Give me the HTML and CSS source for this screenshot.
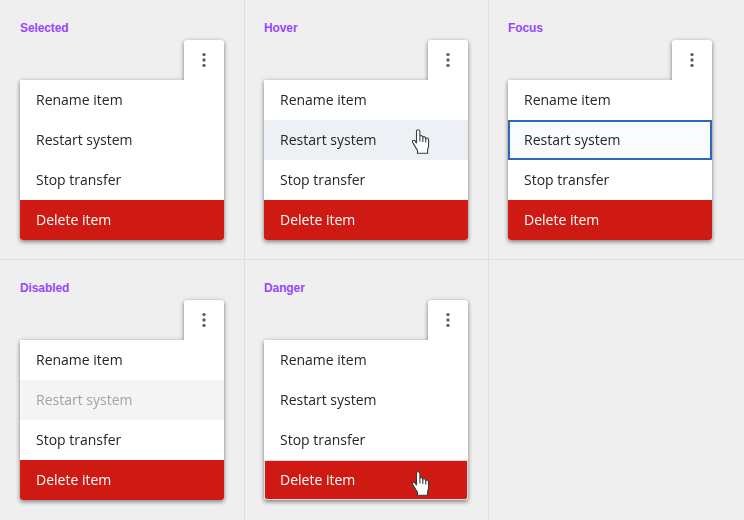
FILE: index.html
```
<!DOCTYPE html>
<html lang="en">
<head>
<meta charset="utf-8">
<title>Menu states</title>
<link rel="stylesheet" href="styles.css">
</head>
<body>
<svg class="symbols" aria-hidden="true">
  <symbol id="dots" viewBox="0 0 4 16"><circle cx="2" cy="2.6" r="1.7"/><circle cx="2" cy="8" r="1.7"/><circle cx="2" cy="13.4" r="1.7"/></symbol>
  <symbol id="hand" viewBox="0 0 20 26"><path d="M6.5 24.2V21.2L4.7 18.6 1.6 13.2C1.2 12.2 1.5 11.3 2.4 11.3 3.7 11.2 4.9 12.6 5.5 14.3V2.7C5.5 1.3 6.1.7 7.2.7S8.9 1.3 8.9 2.7V8.5C9 7 9.4 6.4 10.3 6.5S11.7 7.2 11.8 8.9V9.6C11.9 8.3 12.3 7.5 13.2 7.6S14.6 8.5 14.7 10.2V10.6C14.9 9.5 15.3 8.9 16.2 9 17.3 9.1 17.6 10.2 17.6 11.7V16.5C17.6 18.5 16.6 19.4 16.6 21.4V24.2Z"/><path d="M8.9 8.5v4M11.8 9.3v3.8M14.7 10.4v3.2"/></symbol>
</svg>
<main class="board">
  <section class="cell">
    <h2>Selected</h2>
    <div class="menu">
      <button class="trigger" aria-label="More"><svg><use href="#dots"/></svg></button>
      <ul><li>Rename item</li><li>Restart system</li><li>Stop transfer</li><li class="danger">Delete item</li></ul>
    </div>
  </section>
  <section class="cell">
    <h2>Hover</h2>
    <div class="menu">
      <button class="trigger" aria-label="More"><svg><use href="#dots"/></svg></button>
      <ul><li>Rename item</li><li class="hover">Restart system<svg class="cursor"><use href="#hand"/></svg></li><li>Stop transfer</li><li class="danger">Delete item</li></ul>
    </div>
  </section>
  <section class="cell">
    <h2>Focus</h2>
    <div class="menu">
      <button class="trigger" aria-label="More"><svg><use href="#dots"/></svg></button>
      <ul><li>Rename item</li><li class="focus">Restart system</li><li>Stop transfer</li><li class="danger">Delete item</li></ul>
    </div>
  </section>
  <section class="cell">
    <h2>Disabled</h2>
    <div class="menu">
      <button class="trigger" aria-label="More"><svg><use href="#dots"/></svg></button>
      <ul><li>Rename item</li><li class="disabled">Restart system</li><li>Stop transfer</li><li class="danger">Delete item</li></ul>
    </div>
  </section>
  <section class="cell">
    <h2>Danger</h2>
    <div class="menu">
      <button class="trigger" aria-label="More"><svg><use href="#dots"/></svg></button>
      <ul><li>Rename item</li><li>Restart system</li><li>Stop transfer</li><li class="danger outlined">Delete item<svg class="cursor low"><use href="#hand"/></svg></li></ul>
    </div>
  </section>
  <section class="cell"></section>
</main>
</body>
</html>
```
FILE: styles.css
```
* { box-sizing: border-box; }
body { margin: 0; background: #efefef; }
.symbols { position: absolute; width: 0; height: 0; }
.board {
  display: grid;
  grid-template-columns: 245px 244px 255px;
  grid-template-rows: 260px 260px;
  width: 744px;
  height: 520px;
}
.cell {
  padding: 20px 20px 0 19px;
  border-right: 1px solid #dfdfdf;
  border-bottom: 1px solid #dfdfdf;
}
.cell:nth-child(3n+1) { padding-left: 20px; }
.cell:nth-child(3n) { border-right: 0; }
.cell:nth-child(n+4) { border-bottom: 0; }
h2 {
  margin: 0 0 4px;
  font: bold 12px/16px "Liberation Sans", Arial, sans-serif;
  letter-spacing: -.1px;
  color: #9747ff;
}
.menu {
  display: flex;
  flex-direction: column;
  width: 204px;
  filter: drop-shadow(0 2px 2px rgba(0,0,0,.38)) drop-shadow(0 0 2px rgba(0,0,0,.14));
}
.trigger {
  display: flex;
  align-items: center;
  justify-content: center;
  align-self: flex-end;
  width: 40px;
  height: 40px;
  padding: 0;
  border: 0;
  border-radius: 3px 3px 0 0;
  background: #fff;
}
.trigger svg { width: 4px; height: 16px; fill: #616161; }
ul {
  margin: 0;
  padding: 0;
  list-style: none;
  background: #fff;
  border-radius: 0 0 3px 3px;
}
li {
  position: relative;
  height: 40px;
  padding-left: 16px;
  font: 14px/40px "Open Sans", "Noto Sans", sans-serif;
  color: #252525;
}
.danger { background: #cf1a13; color: #fff; border-radius: 0 0 3px 3px; }
.hover { background: #edf1f6; }
.focus {
  padding-left: 14px;
  border: 2px solid #3065bd;
  background: #f8fcff;
  line-height: 36px;
}
.disabled { background: #f4f4f4; color: #a3a3a3; }
.outlined { padding-left: 15px; border: 1px solid #dedede; line-height: 38px; }
.cursor {
  position: absolute;
  left: 147px;
  top: 9px;
  width: 20px;
  height: 26px;
  fill: #fff;
  stroke: #3a3a3a;
  stroke-width: 1.1;
}
.low { left: 146px; top: 10px; }
```
